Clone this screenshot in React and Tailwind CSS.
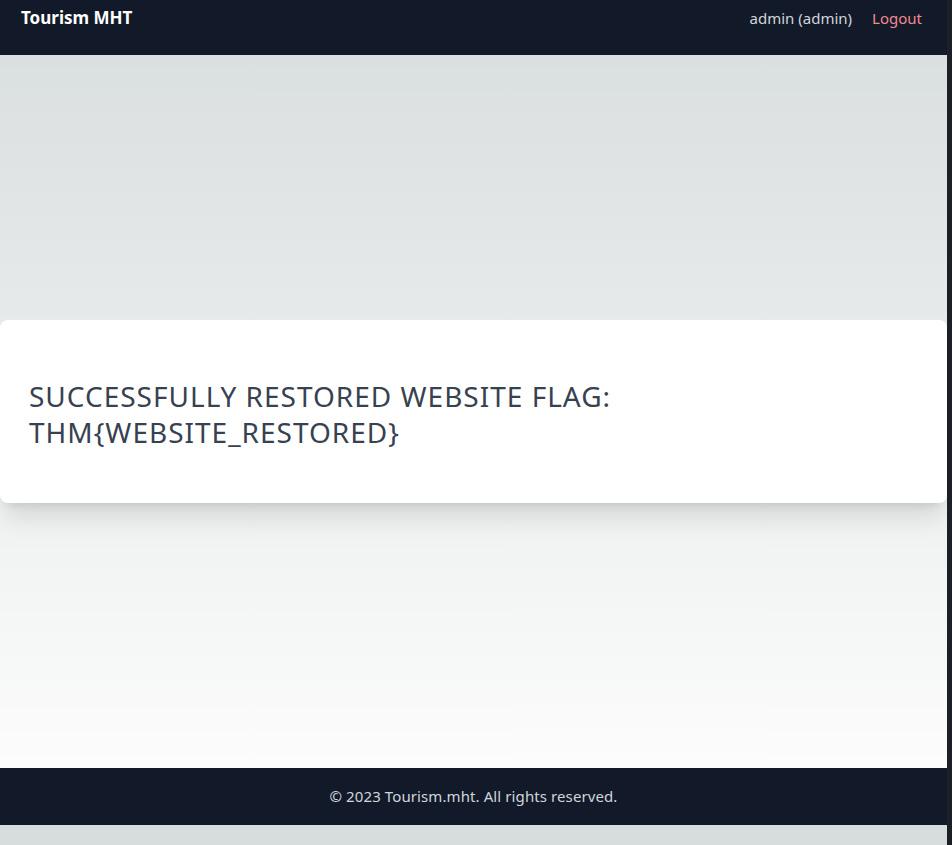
export default function App() {
  const font = { fontFamily: '"Noto Sans", "Open Sans", sans-serif' };
  return (
    <div className="flex h-[845px] w-full overflow-hidden bg-[#d7dcdc]" style={font}>
      <div className="flex w-[947px] flex-col">
        <header className="flex h-[55px] items-start justify-between bg-[#121a29] pl-[21px] pr-[25px] pt-[5px]">
          <div className="text-[17px] font-bold leading-[26px] text-white">Tourism MHT</div>
          <nav className="flex gap-[20px] text-[15px] leading-[26px]">
            <span className="text-[#d1d5db]">admin (admin)</span>
            <span className="text-[#f08a8f]">Logout</span>
          </nav>
        </header>
        <main className="flex h-[713px] flex-col justify-center bg-linear-to-b from-[#dadfe0] to-[#fcfcfc]">
          <div className="flex h-[183px] items-center rounded-lg bg-white px-[29px] shadow-xl">
            <h1 className="mt-[4px] text-[28px] uppercase leading-[36px] tracking-[1px] text-[#374151]">
              Successfully restored website flag:
              <br />
              THM{"{"}WEBSITE_RESTORED{"}"}
            </h1>
          </div>
        </main>
        <footer className="flex h-[57px] items-center justify-center bg-[#121a29] text-[15px] tracking-[0.1px] text-[#d1d5db]">
          © 2023 Tourism.mht. All rights reserved.
        </footer>
      </div>
      <div className="w-[5px] bg-[#1c1f26]" />
    </div>
  );
}
